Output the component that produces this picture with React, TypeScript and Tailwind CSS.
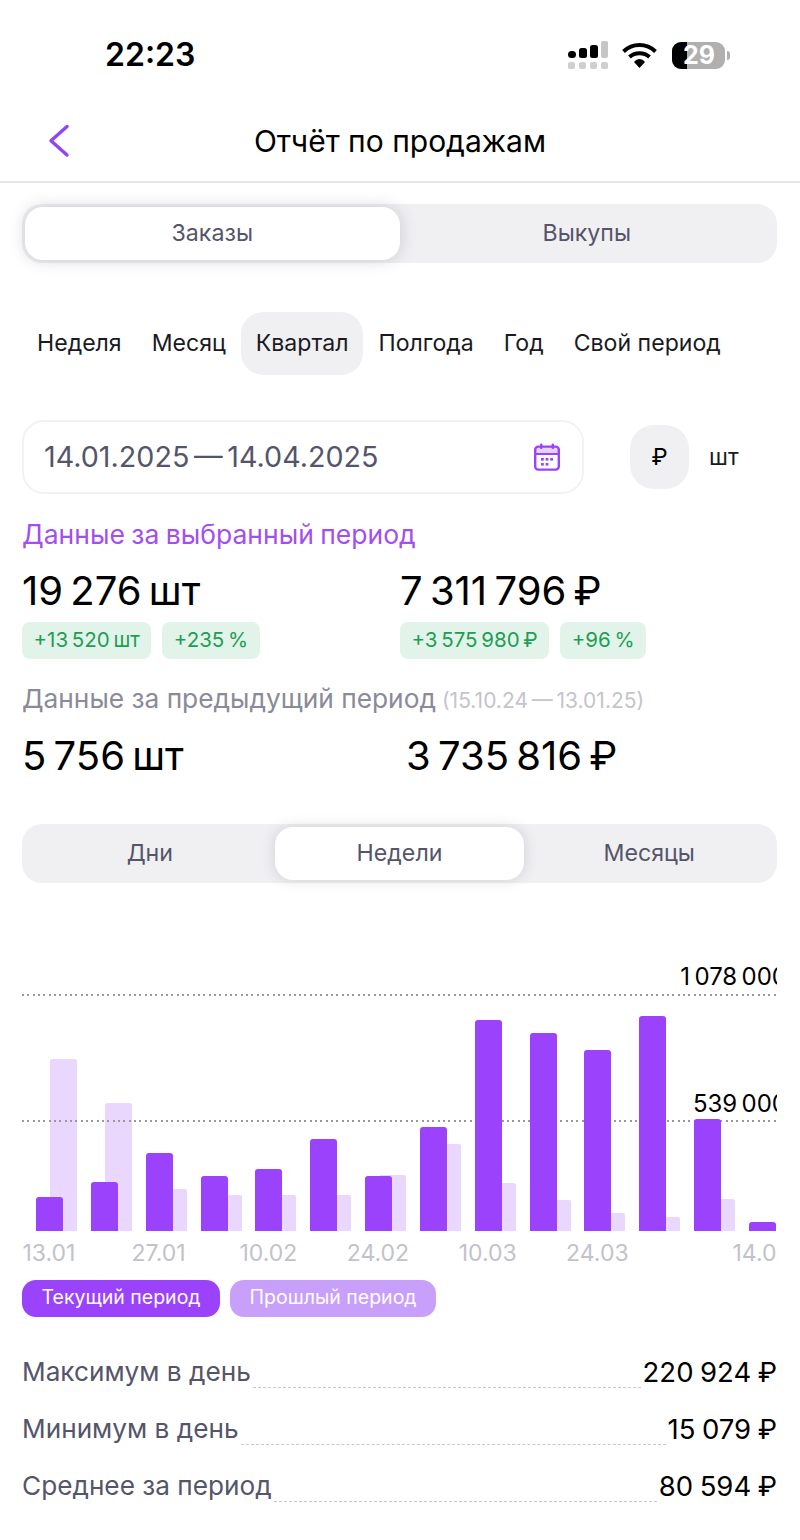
const periods = [
  { label: "Неделя" },
  { label: "Месяц" },
  { label: "Квартал", active: true },
  { label: "Полгода" },
  { label: "Год" },
  { label: "Свой период" },
];

// current / previous bar heights per week
const bars = [
  [34, 172],
  [49, 128],
  [78, 42],
  [55, 36],
  [62, 36],
  [92, 36],
  [55, 56],
  [104, 87],
  [211, 48],
  [198, 31],
  [181, 18],
  [215, 14],
  [112, 32],
  [9, 0],
];

const xLabels = ["13.01", "", "27.01", "", "10.02", "", "24.02", "", "10.03", "", "24.03", "", "", "14.04"];

const stats = [
  { label: "Максимум в день", value: "220 924 ₽" },
  { label: "Минимум в день", value: "15 079 ₽" },
  { label: "Среднее за период", value: "80 594 ₽" },
];

function StatusBar() {
  return (
    <div className="h-[101px] flex items-start justify-between pt-[35px] pl-[105px] pr-[70px]">
      <span className="text-[32px] leading-[40px] font-semibold text-black">22:23</span>
      <div className="flex items-center pt-[6px]">
        <svg width="41" height="28" viewBox="0 0 41 28" className="mr-[13px] -ml-[2px]">
          <rect x="0" y="10" width="8" height="7" rx="3.5" fill="#000" />
          <rect x="11" y="7" width="8" height="10" rx="2.5" fill="#000" />
          <rect x="22" y="4" width="8" height="13" rx="2.5" fill="#000" />
          <rect x="33" y="0" width="7" height="17" rx="2" fill="#c6c6c6" />
          <rect x="0" y="21" width="7" height="7" rx="2" fill="#cfcfcf" />
          <rect x="11" y="21" width="7" height="7" rx="2" fill="#cfcfcf" />
          <rect x="22" y="21" width="7" height="7" rx="2" fill="#cfcfcf" />
          <rect x="33" y="21" width="7" height="7" rx="2" fill="#cfcfcf" />
        </svg>
        <svg width="35" height="26" viewBox="0 0 35 26" className="mr-[15px]">
          <path d="M1.5 9.5C10.5 .8 24.5 .8 33.5 9.5" fill="none" stroke="#000" strokeWidth="4" />
          <path d="M7.5 15C13 10 22 10 27.5 15" fill="none" stroke="#000" strokeWidth="4" />
          <path d="M12 20C15.5 16 19.5 16 23 20L17.5 26Z" fill="#000" />
        </svg>
        <div className="relative w-[58px] h-[27px] flex items-center">
          <div className="w-[53px] h-[27px] rounded-[9px] bg-[#b0b0b0] overflow-hidden">
            <div className="w-[15px] h-full bg-black" />
          </div>
          <div className="w-[3px] h-[9px] ml-[2px] rounded-r-full bg-[#b0b0b0]" />
          <span className="absolute left-[9px] top-0 w-[36px] text-center text-[25px] leading-[27px] font-bold text-white">29</span>
        </div>
      </div>
    </div>
  );
}

function NavBar() {
  return (
    <div className="relative h-[82px] flex items-center justify-center border-b-2 border-[#e6e6e9]">
      <svg width="24" height="36" viewBox="0 0 24 36" className="absolute left-[47px] top-[22px] text-[#8f45f5]">
        <path d="M20 3.5L4 17.8L20 32" fill="none" stroke="currentColor" strokeWidth="3.4" strokeLinecap="round" strokeLinejoin="round" />
      </svg>
      <span className="text-[30px] leading-[36px] text-black -mt-[1px]">Отчёт по продажам</span>
    </div>
  );
}

function Segmented({ items, active, shadow }: { items: string[]; active: number; shadow: string }) {
  return (
    <div className="flex h-[59px] rounded-[20px] bg-[#f0f0f3] p-[3px]">
      {items.map((item, i) => (
        <div
          key={item}
          className={
            i === active
              ? `flex-1 flex items-center justify-center rounded-[18px] bg-white text-[23.2px] text-[#55556a] ${shadow}`
              : "flex-1 flex items-center justify-center text-[23.2px] text-[#55556a]"
          }
        >
          {item}
        </div>
      ))}
    </div>
  );
}

function CalendarIcon() {
  return (
    <svg width="26" height="28" viewBox="0 0 26 28" className="text-[#9b42fd]">
      <rect x="1.2" y="3.6" width="23.6" height="23" rx="3" fill="none" stroke="currentColor" strokeWidth="2.4" />
      <rect x="1.2" y="3.6" width="23.6" height="7.4" rx="2" fill="currentColor" opacity="0.25" />
      <rect x="1.2" y="10" width="23.6" height="2" fill="currentColor" />
      <rect x="6" y="0.5" width="2.4" height="5.5" rx="1" fill="currentColor" />
      <rect x="17.6" y="0.5" width="2.4" height="5.5" rx="1" fill="currentColor" />
      <rect x="7" y="15" width="2.8" height="2.6" fill="currentColor" />
      <rect x="11.6" y="15" width="2.8" height="2.6" fill="currentColor" />
      <rect x="16.2" y="15" width="2.8" height="2.6" fill="currentColor" />
      <rect x="7" y="20" width="2.8" height="2.6" fill="currentColor" />
      <rect x="11.6" y="20" width="2.8" height="2.6" fill="currentColor" />
    </svg>
  );
}

function Badge({ children }: { children: string }) {
  return (
    <span className="h-[37px] px-[11.5px] flex items-center rounded-[8px] bg-[#e2f4e9] text-[20.5px] [word-spacing:-0.1em] text-[#1f9d55]">
      {children}
    </span>
  );
}

function Chart() {
  return (
    <div className="mt-[67px]">
      <div className="relative h-[281px] overflow-hidden">
        <span className="absolute right-[-10px] top-[13px] text-[24px] leading-[28px] [word-spacing:-0.1em] text-black whitespace-nowrap z-20">1 078 000</span>
        <div className="absolute left-0 right-0 top-[44px] h-[2px] z-[5] bg-[repeating-linear-gradient(90deg,#999_0_2px,transparent_2px_5.33px)]" />
        <span className="absolute right-[-10px] top-[140px] text-[24px] leading-[28px] [word-spacing:-0.1em] text-black whitespace-nowrap z-20">539 000</span>
        <div className="absolute left-0 right-0 top-[170px] h-[2px] z-[5] bg-[repeating-linear-gradient(90deg,#999_0_2px,transparent_2px_5.33px)]" />
        <div className="flex items-end h-full pl-[14px] gap-[13.85px] w-[800px]">
          {bars.map(([cur, prev], i) => (
            <div key={i} className="flex items-end w-[41px] shrink-0">
              <div className="relative z-10 w-[27px] shrink-0 rounded-t-[3px] bg-[#9b42fd]" style={{ height: cur }} />
              {prev > 0 && (
                <div className="w-[27px] shrink-0 -ml-[13px] rounded-t-[2px] bg-[#e9d7fd]" style={{ height: prev }} />
              )}
            </div>
          ))}
        </div>
      </div>
      <div className="overflow-hidden h-[32px] mt-[6px]">
        <div className="flex -ml-[0.5px] w-[800px]">
          {xLabels.map((label, i) => (
            <div key={i} className="w-[54.85px] shrink-0 flex justify-center">
              <span className="text-[23px] leading-[32px] text-[#c2c2cc]">{label}</span>
            </div>
          ))}
        </div>
      </div>
    </div>
  );
}

export default function App() {
  return (
    <div className="w-[800px] h-[1540px] overflow-hidden bg-white font-['Inter','Noto_Sans',sans-serif]">
      <StatusBar />
      <NavBar />
      <div className="px-[22px] pt-[21px]">
        <div className="w-[755px]">
          <Segmented items={["Заказы", "Выкупы"]} active={0} shadow="shadow-[0_0_16px_rgba(60,60,80,0.22)]" />
        </div>

        <div className="flex mt-[49px] h-[63px]">
          {periods.map((p) => (
            <div
              key={p.label}
              className={
                p.active
                  ? "px-[15px] flex items-center rounded-[22px] bg-[#f0f0f3] text-[23.1px] text-[#1a1a1f]"
                  : "px-[15px] flex items-center text-[23.1px] text-[#1a1a1f]"
              }
            >
              {p.label}
            </div>
          ))}
        </div>

        <div className="flex items-center mt-[45px]">
          <div className="w-[562px] h-[74px] pl-[20px] pr-[22px] flex items-center justify-between rounded-[22px] border-2 border-[#f2f2f4]">
            <span className="text-[28.7px] [word-spacing:-0.12em] text-[#55556a]">14.01.2025 — 14.04.2025</span>
            <CalendarIcon />
          </div>
          <div className="ml-[46px] w-[59px] h-[64px] flex items-center justify-center rounded-[24px] bg-[#f0f0f3] text-[23px] text-black">₽</div>
          <span className="ml-[20px] text-[23px] text-[#1a1a1f]">шт</span>
        </div>

        <div className="mt-[24px] text-[26.5px] leading-[32px] [word-spacing:-1px] text-[#a24ff0]">Данные за выбранный период</div>

        <div className="flex mt-[18px]">
          <div className="w-[378px]">
            <div className="text-[40px] leading-[46px] [word-spacing:-0.1em] text-black">19 276 шт</div>
            <div className="flex gap-[11px] mt-[8px]">
              <Badge>+13 520 шт</Badge>
              <Badge>+235 %</Badge>
            </div>
          </div>
          <div>
            <div className="text-[40px] leading-[46px] [word-spacing:-0.1em] text-black">7 311 796 ₽</div>
            <div className="flex gap-[11px] mt-[8px]">
              <Badge>+3 575 980 ₽</Badge>
              <Badge>+96 %</Badge>
            </div>
          </div>
        </div>

        <div className="mt-[24px] flex items-baseline gap-[6px] whitespace-nowrap">
          <span className="text-[26.3px] leading-[32px] text-[#8a8a99]">Данные за предыдущий период</span>
          <span className="text-[21px] [word-spacing:-0.1em] text-[#c4c4cc]">(15.10.24 — 13.01.25)</span>
        </div>

        <div className="flex mt-[16px]">
          <div className="w-[384px] text-[40px] leading-[46px] [word-spacing:-0.1em] text-black">5 756 шт</div>
          <div className="text-[40px] leading-[46px] [word-spacing:-0.1em] text-black">3 735 816 ₽</div>
        </div>

        <div className="mt-[45px] w-[755px]">
          <Segmented items={["Дни", "Недели", "Месяцы"]} active={1} shadow="shadow-[0_0_14px_rgba(60,60,80,0.18)]" />
        </div>

        <div className="w-[755px]">
          <Chart />
        </div>

        <div className="flex gap-[10px] mt-[11px]">
          <span className="h-[37px] px-[19.5px] flex items-center rounded-[14px] bg-[#9b42fd] text-[19.5px] text-white">Текущий период</span>
          <span className="h-[37px] px-[19.5px] flex items-center rounded-[14px] bg-[#c89ffb] text-[19.5px] text-white">Прошлый период</span>
        </div>

        <div className="w-[755px] mt-[39px] flex flex-col gap-[25px]">
          {stats.map((s) => (
            <div key={s.label} className="flex items-end h-[32px]">
              <span className="text-[26.2px] leading-[32px] text-[#55556a] whitespace-nowrap">{s.label}</span>
              <div className="flex-1 mx-[2px] border-b-[1.5px] border-dashed border-[#c8c8d0]" />
              <span className="text-[27.5px] leading-[32px] [word-spacing:-1.2px] text-black whitespace-nowrap">{s.value}</span>
            </div>
          ))}
        </div>
      </div>
    </div>
  );
}
